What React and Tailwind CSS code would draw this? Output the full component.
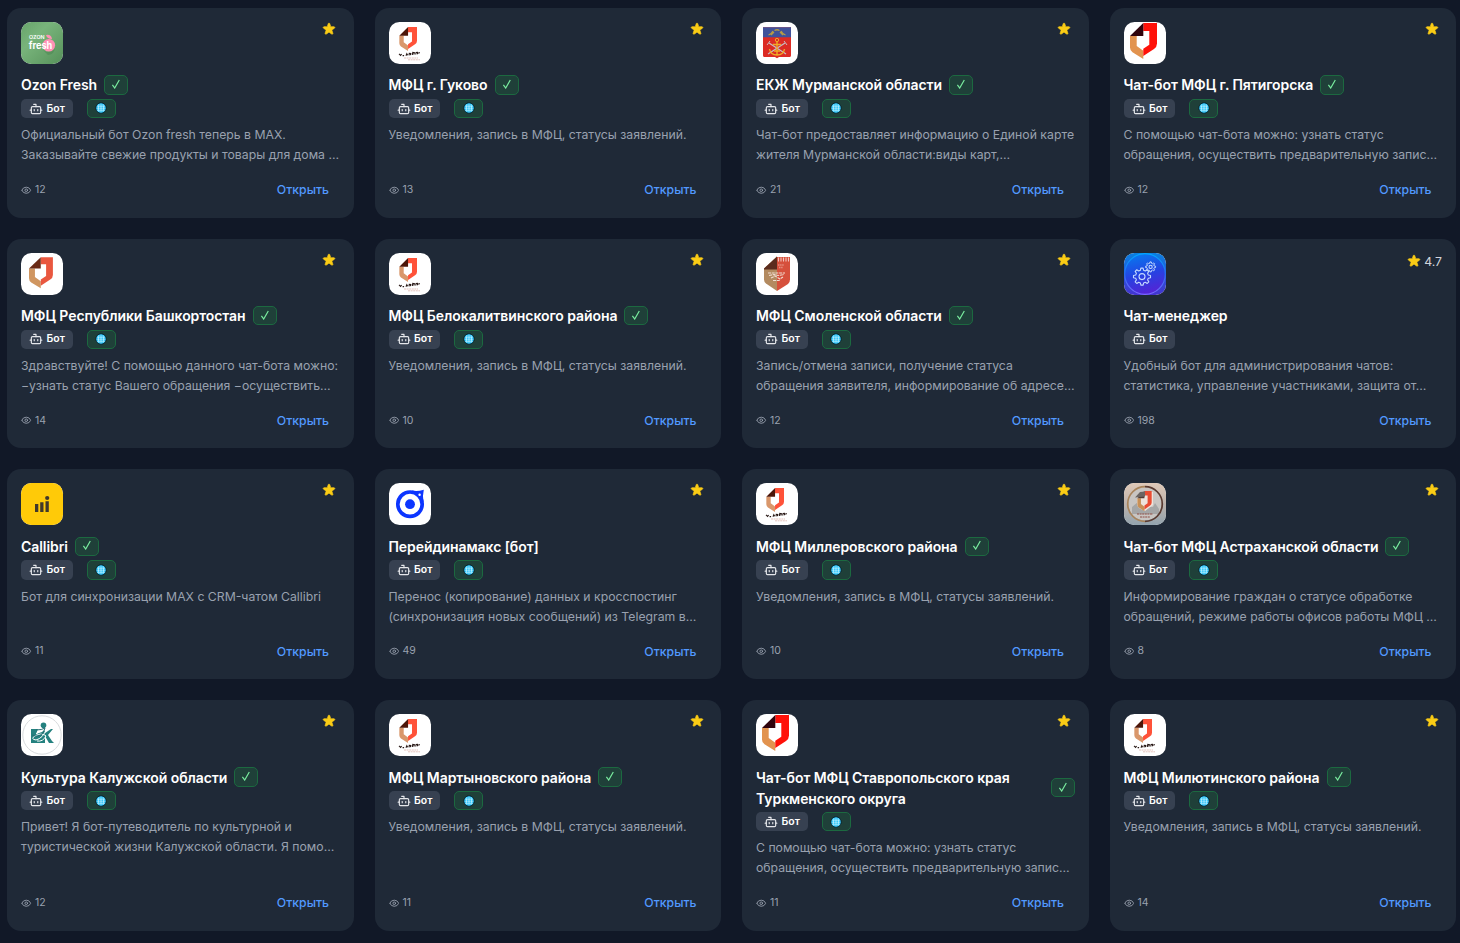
import { Bot, Eye } from 'lucide-react';

const NOTICE = 'Уведомления, запись в МФЦ, статусы заявлений.';
const HELP   = 'С помощью чат-бота можно: узнать статус\nобращения, осуществить предварительную запис…';

const bots = [
  { title: 'Ozon Fresh', logo: 'ozon', views: 12, verified: true, web: true, text: 'Официальный бот Ozon fresh теперь в MAX.\nЗаказывайте свежие продукты и товары для дома …' },
  { title: 'МФЦ г. Гуково', logo: 'mfcSmall', views: 13, verified: true, web: true, text: NOTICE },
  { title: 'ЕКЖ Мурманской области', logo: 'murmansk', views: 21, verified: true, web: true, text: 'Чат-бот предоставляет информацию о Единой карте\nжителя Мурманской области:виды карт,…' },
  { title: 'Чат-бот МФЦ г. Пятигорска', logo: 'mfcBig', views: 12, verified: true, web: true, text: HELP },
  { title: 'МФЦ Республики Башкортостан', logo: 'mfcMid', views: 14, verified: true, web: true, text: 'Здравствуйте! С помощью данного чат-бота можно:\n−узнать статус Вашего обращения −осуществить…' },
  { title: 'МФЦ Белокалитвинского района', logo: 'mfcSmall', views: 10, verified: true, web: true, text: NOTICE },
  { title: 'МФЦ Смоленской области', logo: 'smolensk', views: 12, verified: true, web: true, text: 'Запись/отмена записи, получение статуса\nобращения заявителя, информирование об адресе…' },
  { title: 'Чат-менеджер', logo: 'gears', views: 198, rating: '4.7', text: 'Удобный бот для администрирования чатов:\nстатистика, управление участниками, защита от…' },
  { title: 'Callibri', logo: 'callibri', views: 11, verified: true, web: true, text: 'Бот для синхронизации MAX с CRM-чатом Callibri' },
  { title: 'Перейдинамакс [бот]', logo: 'ring', views: 49, web: true, text: 'Перенос (копирование) данных и кросспостинг\n(синхронизация новых сообщений) из Telegram в…' },
  { title: 'МФЦ Миллеровского района', logo: 'mfcSmall', views: 10, verified: true, web: true, text: NOTICE },
  { title: 'Чат-бот МФЦ Астраханской области', logo: 'astrakhan', views: 8, verified: true, web: true, text: 'Информирование граждан о статусе обработке\nобращений, режиме работы офисов работы МФЦ …' },
  { title: 'Культура Калужской области', logo: 'kaluga', views: 12, verified: true, web: true, text: 'Привет! Я бот-путеводитель по культурной и\nтуристической жизни Калужской области. Я помо…' },
  { title: 'МФЦ Мартыновского района', logo: 'mfcSmall', views: 11, verified: true, web: true, text: NOTICE },
  { title: 'Чат-бот МФЦ Ставропольского края Туркменского округа', logo: 'mfcBig', views: 11, verified: true, web: true, text: HELP },
  { title: 'МФЦ Милютинского района', logo: 'mfcSmall', views: 14, verified: true, web: true, text: NOTICE },
];

function MfcMark({ red, tan, dark, transform }) {
  return (
    <g transform={transform}>
      <path fill={tan} d="M6 14h6.700v10l6.600 4.800V37L8.500 30.300Q6 28.500 6 25.500z" />
      <path fill={red} d="M19.3 1H33v20.500q0 3.300-3 5.500l-10.700 7V26.800l6-4V9h-6z" />
      <path fill={dark} d="M19.3 1v13H6z" />
    </g>
  );
}

// outline of a cog: every tooth takes four points
function gearPoints(cx, cy, outer, inner, teeth) {
  const pts = [];
  const step = (Math.PI * 2) / teeth;
  for (let i = 0; i < teeth; i++) {
    [[-0.32, inner], [-0.17, outer], [0.17, outer], [0.32, inner]].forEach(([k, r]) => {
      const a = (i + k) * step - Math.PI / 2;
      pts.push(`${(cx + r * Math.cos(a)).toFixed(2)},${(cy + r * Math.sin(a)).toFixed(2)}`);
    });
  }
  return pts.join(' ');
}

const logos = {
  ozon: (
    <>
      <defs>
        <linearGradient id="ozonBg" x1="0" y1="0" x2="1" y2="1">
          <stop offset="0" stopColor="#68a46b" />
          <stop offset=".35" stopColor="#78b47b" />
          <stop offset="1" stopColor="#56915a" />
        </linearGradient>
      </defs>
      <rect width="42" height="42" fill="url(#ozonBg)" />
      <path d="M22 28q4 3 8 0l4-3q0 7-7 8z" fill="#47834e" opacity=".45" />
      <circle cx="27.8" cy="23.3" r="6.3" fill="#ff91b5" />
      <path d="M25 13q5-1 6 4-5 0-6-4z" fill="#ff91b5" />
      <text x="8" y="17" fontFamily="Inter, sans-serif" fontSize="4.8" fontWeight="600" fill="#fff" textLength="15.5" lengthAdjust="spacingAndGlyphs">OZON</text>
      <text x="7.8" y="26.7" fontFamily="Inter, sans-serif" fontSize="9.8" fontWeight="700" fill="#fff" textLength="23.5" lengthAdjust="spacingAndGlyphs">fresh</text>
    </>
  ),
  mfcSmall: (
    <>
      <MfcMark red="#ff5239" tan="#d9976b" dark="#4c1609" transform="translate(6.4 4.3) scale(.655 .667)" />
      <path d="M10 31.800l1.600 1.600 1-1.400M13.600 33.600h1.500M17 33.700l.8-2 .9 1.600M20 33.300l.3-2 1.500.2-.4 1.700M23.300 33l.5-2.600 1.600.3-.6 2M26.700 32.500l.4-2 1.400-.2v1.900M29.300 31.300l1.500-.8" fill="none" stroke="#2b1b18" strokeWidth="1.1" />
      <path d="M15 36h14M19 37.8h12" stroke="#c98679" strokeWidth=".5" strokeDasharray="2 .6" />
    </>
  ),
  mfcMid: <MfcMark red="#e9573f" tan="#d09660" dark="#6a2a15" transform="translate(2.7 3.4) scale(.885 .86)" />,
  mfcBig: <MfcMark red="#ff1109" tan="#e2934f" dark="#30040d" />,
  murmansk: (
    <>
      <path d="M7 5.3h28v28.2q0 1.6-1.6 1.6H23L21 36.3 19 35H8.6Q7 35 7 33.5z" fill="#dc2b24" />
      <path d="M7 5.3h28v10H7z" fill="#40529a" />
      <path d="M12.5 13q3-1 4.5-4M29.5 13q-3-1-4.5-4M15 13l3-3M27 13l-3-3M18.5 8.5q2.5-1.5 5 0" fill="none" stroke="#b59a45" strokeWidth="1.3" />
      <path d="M13 21l17 11M29 21L12 32" stroke="#c7bcc2" strokeWidth="1.3" />
      <path d="M11 23l3-4M31 23l-3-4" stroke="#c7bcc2" strokeWidth="1" />
      <circle cx="21" cy="18" r="1.7" fill="none" stroke="#efaa26" strokeWidth="1" />
      <path d="M21 19.7V33M17 22.5h8M13.5 27q1 6 7.5 6t7.5-6M18 29h6" fill="none" stroke="#efaa26" strokeWidth="1.4" />
    </>
  ),
  smolensk: (
    <>
      <path d="M8 15.5L21 3.5V38L10 30.5Q8 29 8 26.5z" fill="#b38a60" />
      <path d="M21 4h13v22.5q0 3-2 4.5l-11 7z" fill="#d6503c" />
      <path d="M21 3.5v13H8v-1z" fill="#5b2c1e" />
      <path d="M22.5 4.5v4M25 4.5v4M27.5 4.5v4M30 4.5v4M32.5 4.5v4" stroke="#f3c5bd" strokeWidth="1.1" />
      <path d="M22 12h6M23 14.5h4" stroke="#e58c7e" strokeWidth="1.3" strokeDasharray="1.5 .6" />
      <path d="M12 20h17M13 22.5l5-1 4 1 6-1M15 25l4-2 5 3 3-2M17 27.5h7" fill="none" stroke="#f1ddd2" strokeWidth="1.1" strokeDasharray="3 .7" />
    </>
  ),
  gears: (
    <>
      <defs>
        <linearGradient id="gearBg" x1=".3" y1="0" x2=".55" y2="1">
          <stop offset="0" stopColor="#0878ee" />
          <stop offset=".5" stopColor="#2444e2" />
          <stop offset="1" stopColor="#5523d5" />
        </linearGradient>
        <linearGradient id="gearRing" x1="0" y1="0" x2="0" y2="1">
          <stop offset="0" stopColor="#00a8ff" />
          <stop offset=".5" stopColor="#286df0" />
          <stop offset="1" stopColor="#7b67ff" />
        </linearGradient>
        <linearGradient id="gearEdge" x1="0" y1="0" x2="0" y2="1">
          <stop offset="0" stopColor="#0a7fe0" />
          <stop offset="1" stopColor="#4433cf" />
        </linearGradient>
      </defs>
      <rect width="42" height="42" fill="url(#gearEdge)" />
      <circle cx="21" cy="21" r="20.3" fill="url(#gearBg)" stroke="url(#gearRing)" strokeWidth="1.2" />
      <g fill="none" stroke="#c4d9ff" strokeWidth="1.1" strokeLinejoin="round">
        <polygon points={gearPoints(18, 23.6, 8.6, 6.5, 8)} />
        <circle cx="18" cy="23.6" r="3" />
        <polygon points={gearPoints(26.6, 13.9, 5, 3.7, 8)} strokeWidth="1" />
        <circle cx="26.6" cy="13.9" r="1.6" />
      </g>
    </>
  ),
  callibri: (
    <>
      <rect width="42" height="42" fill="#ffca08" />
      <path d="M14 21h3.3v8H14zM19.2 19.2h3.3V29h-3.3zM24.5 18.2h3.3V29h-3.3z" fill="#40382b" />
      <circle cx="26.2" cy="15" r="2.1" fill="#40382b" />
    </>
  ),
  ring: (
    <>
      <circle cx="21" cy="21.2" r="12.2" fill="none" stroke="#0c35ff" strokeWidth="3.7" />
      <path d="M23 7.5q5 1.3 11.8-.8Q33.3 13 34.5 19l-5.5-5.5z" fill="#0c35ff" />
      <circle cx="30.6" cy="11.8" r="1.2" fill="#fff" />
      <circle cx="21" cy="21.2" r="4.9" fill="#0c35ff" />
    </>
  ),
  astrakhan: (
    <>
      <defs>
        <linearGradient id="astraBg" x1="0" y1="0" x2="0" y2="1">
          <stop offset="0" stopColor="#dfc9b8" />
          <stop offset=".5" stopColor="#bdb3ad" />
          <stop offset="1" stopColor="#92a3ae" />
        </linearGradient>
      </defs>
      <rect width="42" height="42" fill="url(#astraBg)" />
      <circle cx="21" cy="21" r="16.5" fill="#c8c5c2" />
      <path d="M8 24l6-5 2 5h13l2-4 4 6v5H8z" fill="#a5a6a6" />
      <path d="M21 3.7a17.3 17.3 0 0 0 0 34.6" fill="none" stroke="#a8845b" strokeWidth="1.7" />
      <path d="M21 3.7a17.3 17.3 0 0 1 0 34.6" fill="none" stroke="#5a3b31" strokeWidth="1.7" />
      <path d="M13 16l8-8v20q-8-3-8-7zM21 9h8v13l-8 6z" fill="#eee3db" />
      <MfcMark red="#e94c32" tan="#c89056" dark="#513c36" transform="translate(10.2 7.5) scale(.53 .56)" />
      <path d="M11 14.5l5-5.5 5-.5v5z" fill="#6b6562" />
      <path d="M13 31h16M16 34h10" stroke="#8f4e45" strokeWidth="1" strokeDasharray="2 .6" />
    </>
  ),
  kaluga: (
    <>
      <circle cx="21" cy="21" r="19.2" fill="none" stroke="#d4d7d9" strokeWidth=".9" />
      <circle cx="22.5" cy="11.3" r="2.8" fill="#24817f" />
      <path d="M10 15h7l-2 5 6-2 3-3v14H10zM24 19l6-4h2l-5 6 4 6 2 2h-5l-4-7z" fill="#24817f" />
      <path d="M15 20q5-5 10-4-3 8-10 10-6-1-1-4 7-4 11 0-3 6-9 5" fill="none" stroke="#fff" strokeWidth="1" />
      <path d="M15 16q6 0 9-2l-2 5M11 21q6 3 11-2" fill="none" stroke="#246d72" strokeWidth="1" />
    </>
  ),
};

function StarIcon() {
  return (
    <svg viewBox="1 .8 18 18" className="size-3.5 shrink-0 fill-[#facc15] stroke-[#facc15]" strokeWidth=".9" strokeLinejoin="round">
      <path d="M9.049 2.927c.3-.921 1.603-.921 1.902 0l1.070 3.292a1 1 0 00.950.690h3.462c.969 0 1.371 1.240.588 1.810l-2.800 2.034a1 1 0 00-.364 1.118l1.070 3.292c.3.921-.755 1.688-1.540 1.118l-2.800-2.034a1 1 0 00-1.175 0l-2.800 2.034c-.784.570-1.838-.197-1.539-1.118l1.070-3.292a1 1 0 00-.364-1.118L2.980 8.720c-.783-.570-.380-1.810.588-1.810h3.461a1 1 0 00.951-.690l1.070-3.292z" />
    </svg>
  );
}

function GlobeIcon() {
  return (
    <svg viewBox="0 0 12 12" className="size-3">
      <circle cx="6" cy="6" r="5.2" fill="#12bdf8" stroke="#07151d" strokeWidth=".8" />
      <path d="M1.8 4.2h8.4M1.5 6.2h9M1.8 8.2h8.4M6 1.5v9M4 2q-1.3 4 0 8M8 2q1.3 4 0 8" fill="none" stroke="#e6faff" strokeWidth=".6" />
    </svg>
  );
}

function BotCard({ bot }) {
  return (
    <article className="flex flex-col rounded-[14px] bg-[#1f2937] px-3.5 pt-3.5 pb-[13.8px]">
      <div className="flex items-start justify-between">
        <svg viewBox="0 0 42 42" className="size-10.5 rounded-[10.5px] bg-white">
          {logos[bot.logo]}
        </svg>
        <div className="flex items-center gap-[3.5px] text-[12.25px] leading-[17.5px] text-gray-300">
          {bot.rating ? (
            <>
              <StarIcon />
              <span>{bot.rating}</span>
            </>
          ) : (
            <span className="mr-[3.5px]"><StarIcon /></span>
          )}
        </div>
      </div>

      <div className="mt-[10.55px] flex items-center gap-[7px]">
        <h3 className="text-sm leading-[21px] font-semibold tracking-[-0.07px] text-white">{bot.title}</h3>
        {bot.verified && (
          <span className="flex h-[19.5px] w-6 shrink-0 items-center justify-center rounded-[5px] border border-[#1c6940] bg-[#1f4039]">
            <svg viewBox="0 0 10 10" className="mb-0.5 size-2.5">
              <path d="M1.4 5.9l2.3 3.1L8.3 1" fill="none" stroke="#79ec9f" strokeWidth="1.2" />
            </svg>
          </span>
        )}
      </div>

      <div className="mt-[3.5px] flex items-center gap-3.5">
        <span className="flex h-[19.2px] items-center gap-[3.5px] rounded-[5px] bg-[#374151] px-2 text-[10.5px] font-semibold text-white">
          <Bot size={14} strokeWidth={2} className="mt-[.5px] text-gray-200" />
          Бот
        </span>
        {bot.web && (
          <span className="flex h-[19.2px] w-[29px] items-center justify-center rounded-[5px] border border-[#1c6940] bg-[#1f4039]">
            <GlobeIcon />
          </span>
        )}
      </div>

      <p className="mt-[7.1px] min-h-10 text-[12.25px] leading-[19.9px] whitespace-pre text-gray-400">{bot.text}</p>

      <div className="mt-auto flex items-center justify-between pt-[10.65px]">
        <span className="flex items-center gap-[3.5px] text-[10.5px] leading-[14px] text-gray-400">
          <Eye size={10.5} strokeWidth={2} />
          {bot.views}
        </span>
        <a href="#" className="px-[10.5px] py-[5.25px] text-[12.25px] leading-[17.5px] font-medium text-[#5299ff]">Открыть</a>
      </div>
    </article>
  );
}

export default function App() {
  return (
    <main className="h-[943px] overflow-hidden bg-[#111827] pt-[7.8px] pr-1 pl-[7px] font-['Inter',sans-serif]">
      <div className="grid grid-cols-4 gap-[21px]">
        {bots.map((bot) => (
          <BotCard key={bot.title} bot={bot} />
        ))}
      </div>
    </main>
  );
}
